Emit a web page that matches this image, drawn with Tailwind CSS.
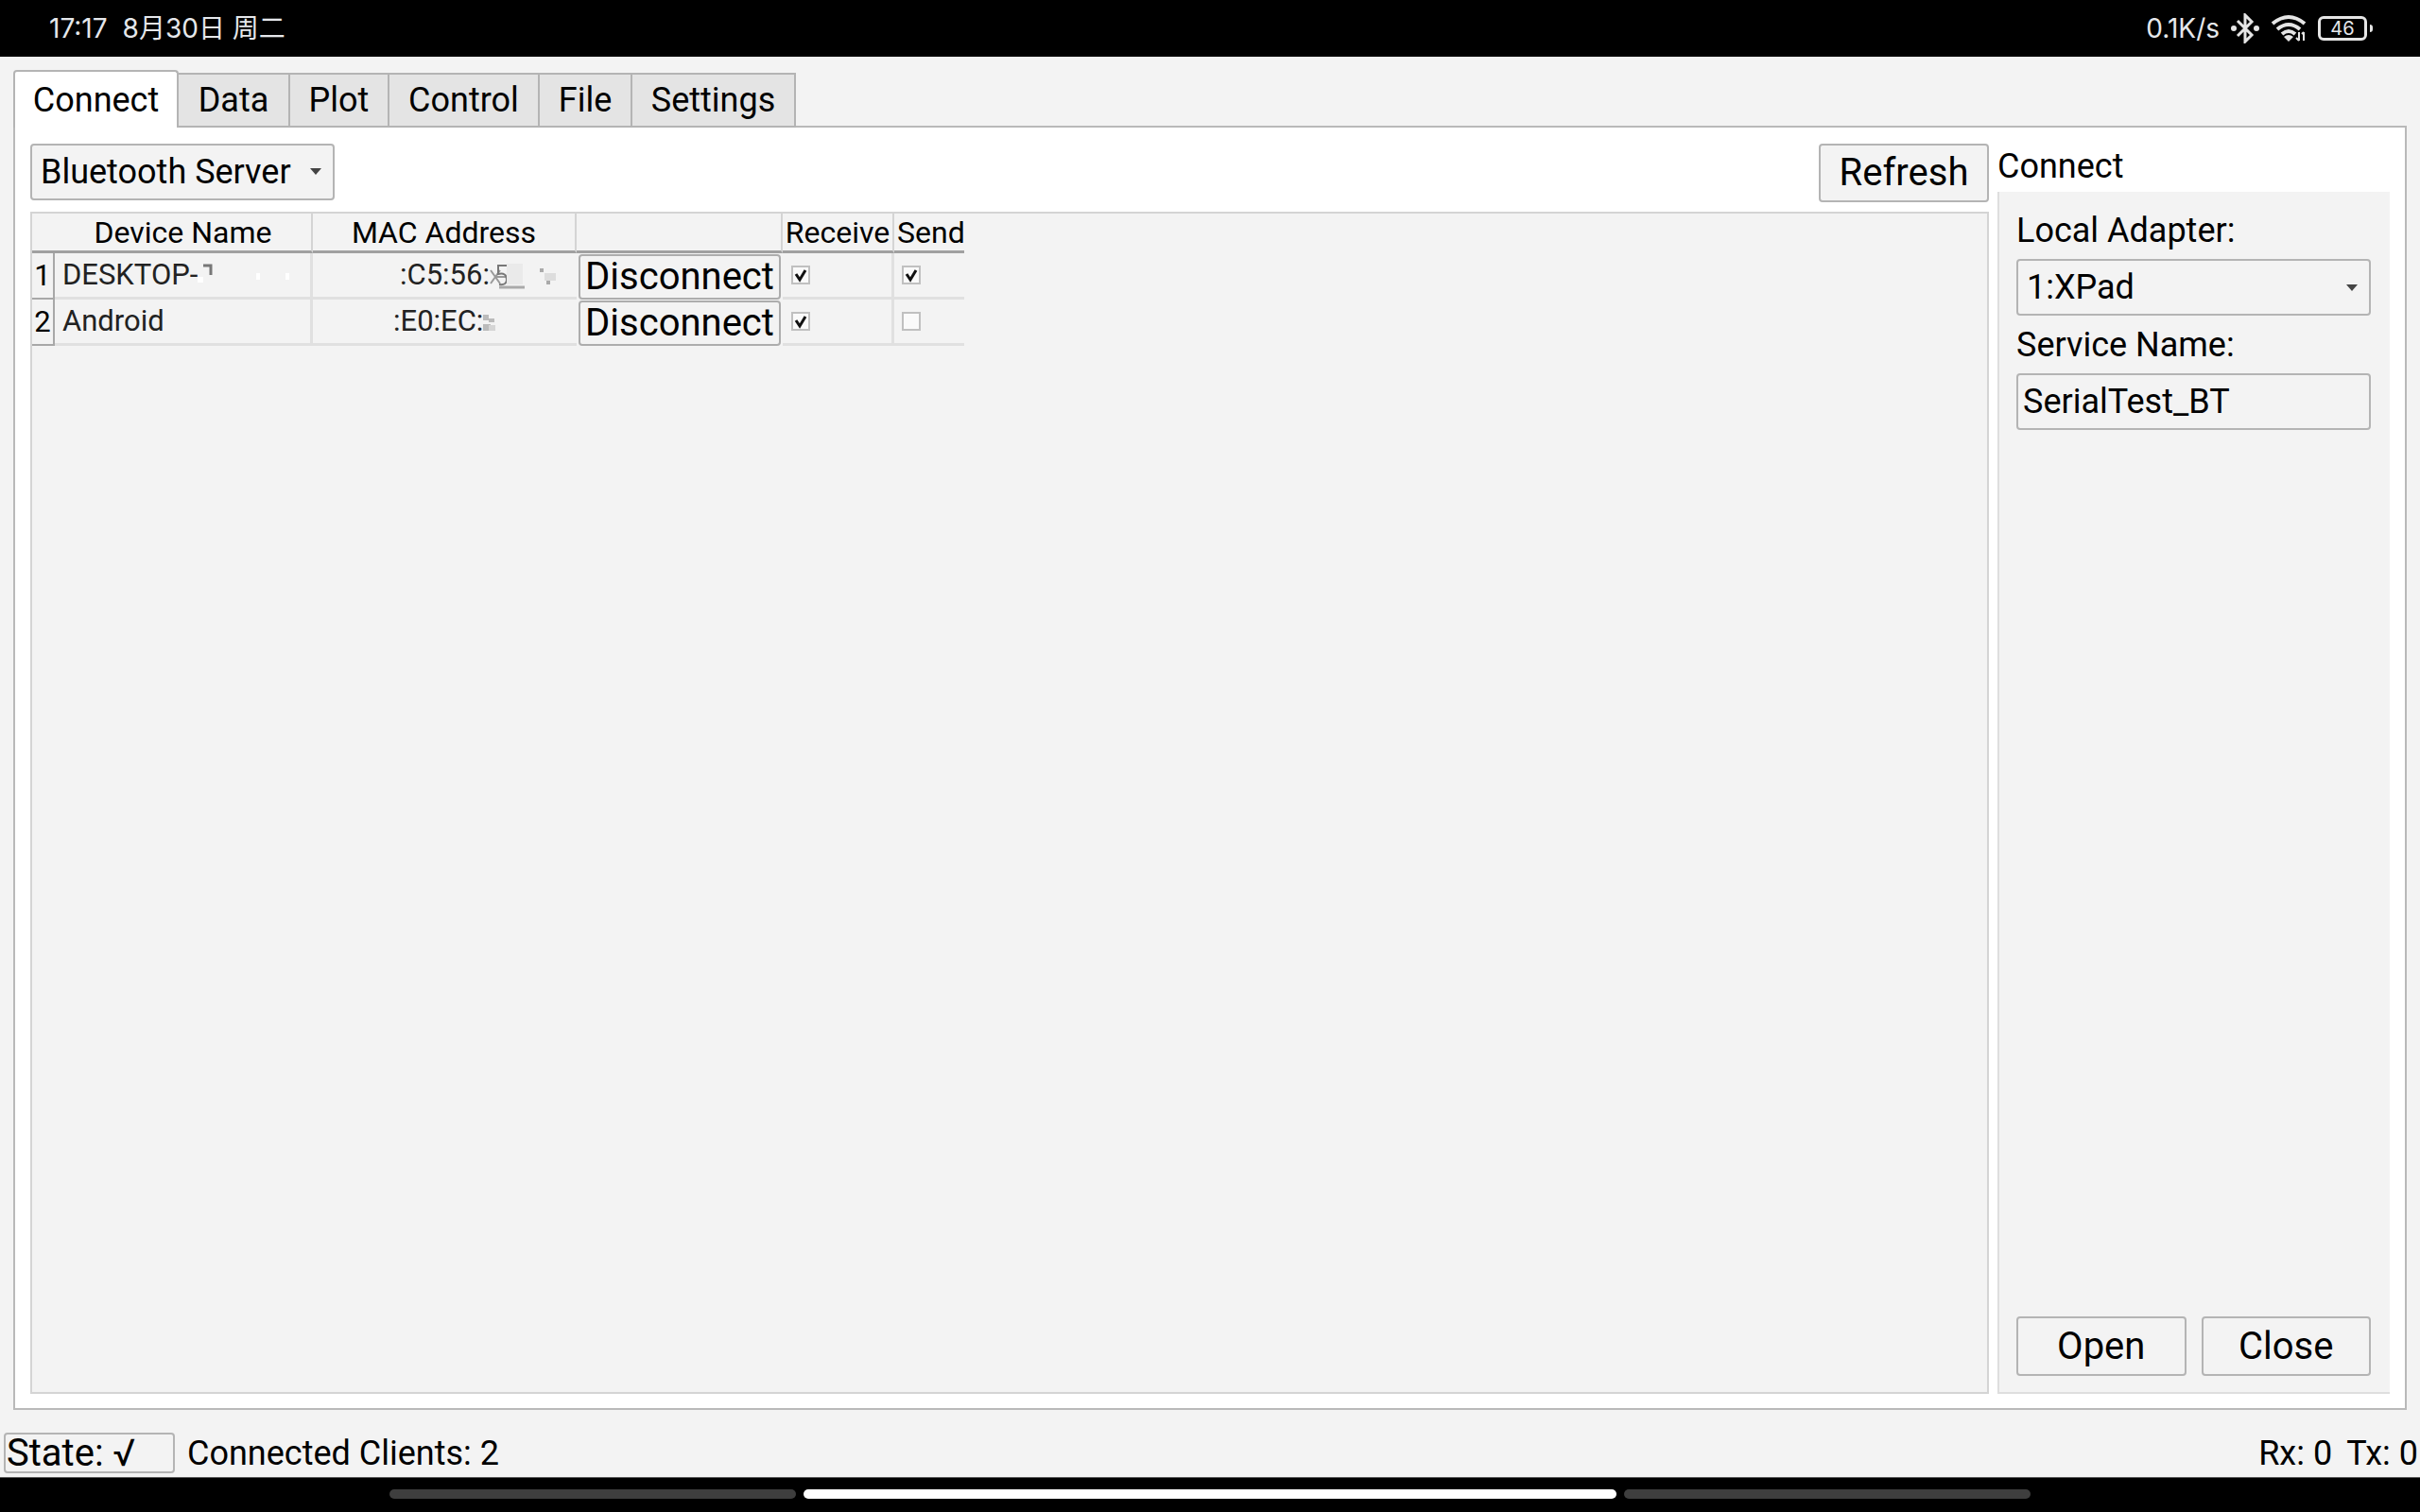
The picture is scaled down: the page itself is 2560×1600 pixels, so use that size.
<!DOCTYPE html>
<html lang="en">
<head>
<meta charset="utf-8">
<meta name="viewport" content="width=device-width, initial-scale=1">
<title>SerialTest</title>
<script src="https://cdn.jsdelivr.net/npm/@tailwindcss/browser@4"></script>
</head>
<body class="flex min-h-screen flex-col bg-[#f3f3f3] font-[Roboto,sans-serif] text-[36px] leading-[42px] text-black">

<!-- Android status bar -->
<header class="flex h-[60px] items-center justify-between bg-black pr-[50px] pl-[52px] font-[Inter,'Noto_Sans_CJK_SC',sans-serif] text-[28px] text-gray-200">
  <div class="flex gap-4"><span>17:17</span><span>8月30日 周二</span></div>
  <div class="flex items-center">
    <span class="mr-3">0.1K/s</span>
    <svg class="mr-3 h-8 w-[30px]" viewBox="0 0 30 32" fill="none" stroke="#e5e5e5" stroke-width="3"><path d="M7 8 22 23 15 30V2l7 7L7 24"/><circle cx="3" cy="16" r="3" fill="#e5e5e5" stroke="none"/><circle cx="27" cy="16" r="3" fill="#e5e5e5" stroke="none"/></svg>
    <svg class="mr-3 h-8 w-[38px]" viewBox="0 0 38 32" fill="none" stroke="#e5e5e5" stroke-width="4"><path d="M2 11Q19-3 36 11M7 17q12-10 24 0M12 22q7-6 14 0"/><path d="m19 30-5-5q5-4 10 0Z" fill="#e5e5e5" stroke="none"/><path d="M30 20v9m-3-3 3 3M35 29v-9m-2 2 2-2" stroke-width="2"/></svg>
    <div class="flex items-center gap-[3px]">
      <span class="flex h-[26px] w-[52px] items-center justify-center rounded-md border-[3px] border-[#e5e5e5] text-[20px] leading-5">46</span>
      <span class="h-2 w-[3px] rounded-r bg-[#e5e5e5]"></span>
    </div>
  </div>
</header>

<div class="flex grow flex-col px-[14px] pt-[14px]">
  <!-- Tabs -->
  <nav class="relative z-10 -mb-[2px] flex h-[61px] items-end" role="tablist">
    <button role="tab" aria-selected="true" class="h-[61px] w-[175px] rounded-t-sm border-x-2 border-t-2 border-[#b4b4b4] bg-white">Connect</button>
    <button role="tab" class="h-[58px] w-[118px] border-t-2 border-r-2 border-b-2 border-[#b4b4b4] bg-[#e4e4e4]">Data</button>
    <button role="tab" class="h-[58px] w-[105px] border-t-2 border-r-2 border-b-2 border-[#b4b4b4] bg-[#e4e4e4]">Plot</button>
    <button role="tab" class="h-[58px] w-[159px] border-t-2 border-r-2 border-b-2 border-[#b4b4b4] bg-[#e4e4e4]">Control</button>
    <button role="tab" class="h-[58px] w-[98px] border-t-2 border-r-2 border-b-2 border-[#b4b4b4] bg-[#e4e4e4]">File</button>
    <button role="tab" class="h-[58px] w-[173px] border-t-2 border-r-2 border-b-2 border-[#b4b4b4] bg-[#e4e4e4]">Settings</button>
  </nav>

  <main class="flex grow gap-[9px] border-2 border-[#b9b9b9] bg-white px-4 py-[15px]">
    <section class="flex grow flex-col gap-[10px] pt-[2px]">
      <div class="flex justify-between">
        <div class="relative h-[60px] w-[322px]">
          <select aria-label="Connection type" class="h-full w-full appearance-none rounded border-2 border-[#b4b4b4] bg-[#f3f3f3] pl-[9px]"><option>Bluetooth Server</option></select>
          <svg class="pointer-events-none absolute top-[26px] right-[14px] h-2 w-3" viewBox="0 0 12 8" fill="#444"><path d="M0 0h12L6 7Z"/></svg>
        </div>
        <button class="h-[62px] w-[180px] rounded border-2 border-[#b4b4b4] bg-[#f3f3f3] text-[40px]">Refresh</button>
      </div>

      <div class="grow border-2 border-[#d4d4d4] bg-[#f3f3f3]">
        <table class="table-fixed w-[986px] border-separate border-spacing-0 text-[31px] leading-9 text-[#222]">
          <colgroup><col class="w-[24px]"><col class="w-[273px]"><col class="w-[279px]"><col class="w-[218px]"><col class="w-[118px]"><col class="w-[74px]"></colgroup>
          <thead class="text-[32px] text-black">
            <tr class="h-[42px]">
              <td class="border-b-3 border-[#a0a0a0] p-0"></td>
              <th class="border-r-2 border-b-3 border-r-[#d4d4d4] border-b-[#a0a0a0] p-0 font-normal">Device Name</th>
              <th class="border-r-2 border-b-3 border-r-[#d4d4d4] border-b-[#a0a0a0] p-0 font-normal">MAC Address</th>
              <th class="border-r-2 border-b-3 border-r-[#d4d4d4] border-b-[#a0a0a0] p-0 font-normal" aria-label="Action"></th>
              <th class="border-r-2 border-b-3 border-r-[#d4d4d4] border-b-[#a0a0a0] p-0 text-center font-normal">Receive</th>
              <th class="border-b-3 border-[#a0a0a0] p-0 pl-[3px] text-left font-normal">Send</th>
            </tr>
          </thead>
          <tbody>
            <tr class="h-[49px]">
              <th class="border-r-2 border-b-2 border-[#a8a8a8] p-0 text-center font-normal text-black">1</th>
              <td class="border-r-3 border-b-3 border-[#e0e0e0] p-0 pl-2">
                <div class="flex items-center">DESKTOP-<svg class="h-8 w-[110px]" viewBox="0 0 110 32"><path d="M6 6h8v10" fill="none" stroke="#777" stroke-width="3"/><path d="M-3 18h9v6h-9zM62 14h4v7h-4zM93 14h4v7h-4z" fill="#fff"/></svg></div>
              </td>
              <td class="border-b-3 border-[#e0e0e0] p-0 pl-[92px]">
                <div class="flex items-center">:C5:56:<svg class="h-9 w-[80px]" viewBox="0 0 80 36"><path d="M1 13l10 14M11 13 1 27M6 20h12" stroke="#999" stroke-width="2"/><path d="M18 8H9v9q9-2 9 6 0 6-8 5" fill="none" stroke="#777" stroke-width="2"/><path d="M18 6h17v22H18z" fill="#eaeaea"/><path d="M10 31h27" stroke="#aaa" stroke-width="3"/><path d="M53 11h4v4h-4zM60 24h4v4h-4z" fill="#aaa"/><path d="M58 16h12v8H58z" fill="#ddd"/></svg></div>
              </td>
              <td class="p-0 pl-[2px]"><button class="block h-[48px] w-[214px] rounded border-2 border-[#adadad] bg-[#f3f3f3] text-[40px] leading-[42px] text-black">Disconnect</button></td>
              <td class="border-r-3 border-b-3 border-[#e0e0e0] p-0 pl-[9px]">
                <div class="grid w-5"><input type="checkbox" checked aria-label="Receive from DESKTOP" class="peer col-start-1 row-start-1 size-5 appearance-none border-2 border-[#c0c0c0] bg-[#fafafa]"><svg class="pointer-events-none invisible col-start-1 row-start-1 size-5 peer-checked:visible" viewBox="0 0 20 20"><path d="m5 9 4 6 6-10" fill="none" stroke="#111" stroke-width="3"/></svg></div>
              </td>
              <td class="border-b-3 border-[#e0e0e0] p-0 pl-2">
                <div class="grid w-5"><input type="checkbox" checked aria-label="Send to DESKTOP" class="peer col-start-1 row-start-1 size-5 appearance-none border-2 border-[#c0c0c0] bg-[#fafafa]"><svg class="pointer-events-none invisible col-start-1 row-start-1 size-5 peer-checked:visible" viewBox="0 0 20 20"><path d="m5 9 4 6 6-10" fill="none" stroke="#111" stroke-width="3"/></svg></div>
              </td>
            </tr>
            <tr class="h-[49px]">
              <th class="border-r-2 border-b-2 border-[#a8a8a8] p-0 text-center font-normal text-black">2</th>
              <td class="border-r-3 border-b-3 border-[#e0e0e0] p-0 pl-2">Android</td>
              <td class="border-b-3 border-[#e0e0e0] p-0 pl-[85px]">
                <div class="flex items-center">:E0:EC:<svg class="h-8 w-4" viewBox="0 0 16 32"><path d="M0 9h6v6H0zM6 13h6v4H6zM0 19h8v7H0z" fill="#bbb"/><path d="M6 20h7v6H6z" fill="#d5d5d5"/></svg></div>
              </td>
              <td class="p-0 pl-[2px]"><button class="block h-[48px] w-[214px] rounded border-2 border-[#adadad] bg-[#f3f3f3] text-[40px] leading-[42px] text-black">Disconnect</button></td>
              <td class="border-r-3 border-b-3 border-[#e0e0e0] p-0 pl-[9px]">
                <div class="grid w-5"><input type="checkbox" checked aria-label="Receive from Android" class="peer col-start-1 row-start-1 size-5 appearance-none border-2 border-[#c0c0c0] bg-[#fafafa]"><svg class="pointer-events-none invisible col-start-1 row-start-1 size-5 peer-checked:visible" viewBox="0 0 20 20"><path d="m5 9 4 6 6-10" fill="none" stroke="#111" stroke-width="3"/></svg></div>
              </td>
              <td class="border-b-3 border-[#e0e0e0] p-0 pl-2">
                <div class="grid w-5"><input type="checkbox" aria-label="Send to Android" class="peer col-start-1 row-start-1 size-5 appearance-none border-2 border-[#c0c0c0] bg-[#fafafa]"><svg class="pointer-events-none invisible col-start-1 row-start-1 size-5 peer-checked:visible" viewBox="0 0 20 20"><path d="m5 9 4 6 6-10" fill="none" stroke="#111" stroke-width="3"/></svg></div>
              </td>
            </tr>
          </tbody>
        </table>
      </div>
    </section>

    <!-- Connection settings -->
    <section class="flex w-[415px] shrink-0 flex-col">
      <h2 class="pt-[5px] pb-[6px]">Connect</h2>
      <form class="flex grow flex-col border-b-2 border-l-2 border-[#dedede] bg-[#f3f3f3] pt-[20px] pr-[20px] pb-[17px] pl-[18px]">
        <label for="adapter">Local Adapter:</label>
        <div class="relative mt-[9px] h-[60px]">
          <select id="adapter" class="h-full w-full appearance-none rounded border-2 border-[#b4b4b4] pl-[9px]"><option>1:XPad</option></select>
          <svg class="pointer-events-none absolute top-[27px] right-[14px] h-2 w-3" viewBox="0 0 12 8" fill="#444"><path d="M0 0h12L6 7Z"/></svg>
        </div>
        <label for="service" class="mt-[10px]">Service Name:</label>
        <input id="service" type="text" value="SerialTest_BT" class="mt-[9px] h-[60px] w-full rounded border-2 border-[#b4b4b4] pl-[5px]">
        <div class="mt-auto flex gap-[16px]">
          <button type="button" class="h-[63px] grow basis-0 rounded border-2 border-[#b4b4b4] text-[40px]">Open</button>
          <button type="button" class="h-[63px] grow basis-0 rounded border-2 border-[#b4b4b4] text-[40px]">Close</button>
        </div>
      </form>
    </section>
  </main>
</div>

<!-- Connection state -->
<footer class="flex h-[71px] items-center pt-[24px] pr-[2px] pb-[4px] pl-[4px]">
  <button class="h-[43px] w-[181px] rounded border-2 border-[#b4b4b4] pl-px text-left text-[40px] leading-[39px]">State: √</button>
  <span class="ml-[13px] grow">Connected Clients: 2</span>
  <span class="mr-[15px]">Rx: 0</span>
  <span>Tx: 0</span>
</footer>

<!-- Gesture bar -->
<div class="flex h-[37px] gap-2 border-t border-[#555] bg-black pt-[12px] pr-[412px] pl-[412px]">
  <span class="h-[10px] grow basis-0 rounded-full bg-[#3e3e3e]"></span>
  <span class="h-[10px] w-[860px] rounded-full bg-white"></span>
  <span class="h-[10px] grow basis-0 rounded-full bg-[#3e3e3e]"></span>
</div>
</body>
</html>
